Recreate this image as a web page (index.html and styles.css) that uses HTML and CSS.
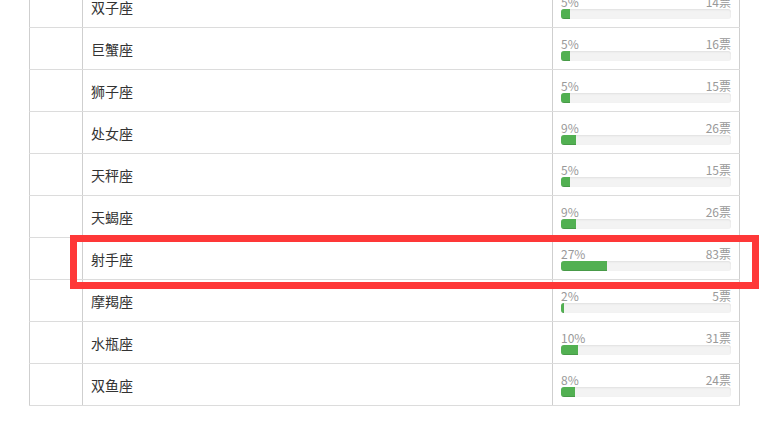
FILE: index.html
```html
<!DOCTYPE html>
<html>
<head>
    <meta charset="utf-8">
    <title>星座投票</title>
    <link rel="stylesheet" href="styles.css">
</head>
<body>
    <div class="vote-wrap">
        <table class="vote-table">
            <colgroup>
                <col class="col-no">
                <col class="col-name">
                <col class="col-result">
            </colgroup>
            <tbody id="rows"></tbody>
        </table>
        <!-- highlight box -->
        <div class="mark"></div>
    </div>

    <script>
        const data = [
            ['双子座', 5, 14],
            ['巨蟹座', 5, 16],
            ['狮子座', 5, 15],
            ['处女座', 9, 26],
            ['天秤座', 5, 15],
            ['天蝎座', 9, 26],
            ['射手座', 27, 83],
            ['摩羯座', 2, 5],
            ['水瓶座', 10, 31],
            ['双鱼座', 8, 24]
        ];
        const rows = document.getElementById('rows');
        data.forEach(([name, pct, votes]) => {
            const tr = document.createElement('tr');
            tr.innerHTML = `
                <td></td>
                <td class="name">${name}</td>
                <td class="result">
                    <div class="nums"><span>${pct}%</span><span>${votes}票</span></div>
                    <div class="progress"><div class="bar" style="width: ${pct}%"></div></div>
                </td>`;
            rows.appendChild(tr);
        });
    </script>
</body>
</html>
```

FILE: styles.css
```css
body {
    margin: 0;
    background: #fff;
    font-family: "Noto Sans CJK SC", "Liberation Sans", sans-serif;
    overflow: hidden;
}
.vote-wrap {
    position: relative;
    padding-left: 29px;
    margin-top: -15px;
}
.vote-table {
    width: 710px;
    border-collapse: collapse;
    table-layout: fixed;
}
.col-no { width: 53px; }
.col-name { width: 470px; }
.col-result { width: 187px; }
.vote-table td {
    border-top: 1px solid #dcdcdc;
    border-bottom: 1px solid #dcdcdc;
    border-left: 1px solid #cfcfcf;
    border-right: 1px solid #cfcfcf;
    height: 42px;
    padding: 0 8px;
    box-sizing: border-box;
}
.name {
    font-size: 14px;
    color: #333;
    vertical-align: middle;
}
.result {
    vertical-align: top;
    padding-top: 8px !important;
}
.nums {
    display: flex;
    justify-content: space-between;
    font-size: 12px;
    line-height: 15px;
    color: #999;
}
.progress {
    height: 10px;
    background: #f3f3f3;
    border-radius: 3px;
    box-shadow: inset 0 1px 2px rgba(0, 0, 0, .08);
    overflow: hidden;
}
.bar {
    height: 100%;
    background: #52b052;
    box-shadow: inset 0 -1px 0 rgba(0, 0, 0, .12);
}
.mark {
    position: absolute;
    left: 70px;
    top: 250px;
    width: 689px;
    height: 54px;
    border: 7px solid #fe3838;
    box-sizing: border-box;
}
```
